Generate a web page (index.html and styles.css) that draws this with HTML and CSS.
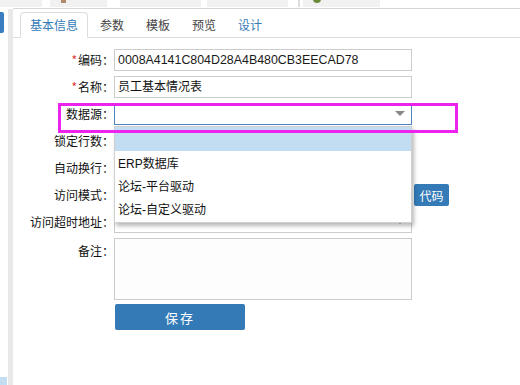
FILE: index.html
```html
<html>

<head>
  <meta charset="utf-8">
  <link rel="stylesheet" href="styles.css">
</head>

<body>
  <div class="topbar">
    <span class="tb" style="width:42px"></span>
    <span class="tb gap" style="width:8px"></span>
    <span class="tb" style="width:57px"><i class="tb-icon"></i></span>
    <span class="tb gap" style="width:13px"></span>
    <span class="tb" style="width:81px"></span>
    <span class="tb gap" style="width:6px"></span>
    <span class="tb" style="width:81px"></span>
    <span class="tb gap" style="width:10px"></span>
    <span class="tb sep" style="width:2px"></span>
    <span class="tb gap" style="width:3px"></span>
    <span class="tb" style="width:77px"><i class="tb-dot"></i></span>
  </div>

  <div class="frame">
    <div class="rail">
      <span class="rail-tab"></span>
      <span class="rail-foot"></span>
    </div>
    <div class="gutter"></div>

    <div class="main">
      <ul class="tabs">
        <li class="tab active">基本信息</li>
        <li class="tab">参数</li>
        <li class="tab">模板</li>
        <li class="tab">预览</li>
        <li class="tab link">设计</li>
      </ul>

      <div class="form">
        <div class="row">
          <label class="label"><em>*</em>编码：</label>
          <div class="field mono">0008A4141C804D28A4B480CB3EECAD78</div>
        </div>
        <div class="row">
          <label class="label"><em>*</em>名称：</label>
          <div class="field">员工基本情况表</div>
        </div>
        <div class="row">
          <label class="label">数据源：</label>
          <div class="select-wrap">
            <div class="field select focus"></div>
            <ul class="dropdown">
              <li class="option hover"></li>
              <li class="option">ERP数据库</li>
              <li class="option">论坛-平台驱动</li>
              <li class="option">论坛-自定义驱动</li>
            </ul>
          </div>
        </div>
        <div class="row">
          <label class="label">锁定行数：</label>
          <div class="field"></div>
        </div>
        <div class="row">
          <label class="label">自动换行：</label>
          <div class="field select"></div>
        </div>
        <div class="row">
          <label class="label">访问模式：</label>
          <div class="field"></div>
          <button class="btn btn-code">代码</button>
        </div>
        <div class="row">
          <label class="label">访问超时地址：</label>
          <div class="field select"></div>
        </div>
        <div class="row top">
          <label class="label">备注：</label>
          <div class="field area"></div>
        </div>
        <div class="row">
          <span class="label"></span>
          <button class="btn btn-save">保存</button>
        </div>
      </div>
    </div>
  </div>

  <div class="mark"></div>
</body>

</html>
```

FILE: styles.css
```css
body {
  margin: 0;
  width: 520px;
  height: 385px;
  overflow: hidden;
  position: relative;
  font-family: "Liberation Sans", "Noto Sans CJK SC", sans-serif;
  font-size: 12px;
  color: #111;
  background: #fff;
}

.topbar {
  display: flex;
  height: 8px;
}

.tb {
  display: block;
  position: relative;
  height: 7px;
  background: #f1f1f1;
}

.tb.gap {
  background: #fff;
}

.tb.sep {
  background: #ddd;
}

.tb-icon {
  position: absolute;
  left: 11px;
  top: 0;
  width: 5px;
  height: 3px;
  background: #b08a6a;
}

.tb-dot {
  position: absolute;
  left: 10px;
  top: -5px;
  width: 8px;
  height: 8px;
  border-radius: 50%;
  background: #6a8a3a;
}

.frame {
  display: flex;
  height: 377px;
}

.rail {
  width: 8px;
  display: flex;
  flex-direction: column;
  justify-content: space-between;
}

.rail-tab {
  display: block;
  margin-top: 4px;
  width: 4px;
  height: 21px;
  background: #3a7cc0;
  border-radius: 0 2px 2px 0;
}

.rail-foot {
  display: block;
  width: 7px;
  height: 8px;
  background: #c3ddf2;
}

.gutter {
  width: 5px;
  margin-top: 1px;
  background: #e8e8e8;
}

.main {
  flex: 1;
  border-top: 1px solid #d6d6d6;
  padding-top: 3px;
}

.tabs {
  display: flex;
  margin: 0;
  padding: 0 0 0 7px;
  list-style: none;
  border-bottom: 1px solid #ddd;
}

.tab {
  margin-right: 2px;
  margin-bottom: -1px;
  padding: 0 9px;
  line-height: 24px;
  border: 1px solid transparent;
  border-radius: 4px 4px 0 0;
  color: #444;
  font-family: "Noto Sans CJK SC", sans-serif;
}

.tab.active {
  color: #337ab7;
  border-color: #ddd #ddd #fff;
  background: #fff;
}

.tab.link {
  color: #337ab7;
}

.form {
  margin-top: 11px;
}

.row {
  display: flex;
  align-items: center;
  margin-bottom: 5px;
}

.row.top {
  align-items: flex-start;
}

.label {
  width: 101px;
  flex: none;
  text-align: right;
  line-height: 22px;
  white-space: nowrap;
  font-family: "Noto Sans CJK SC", sans-serif;
  color: #111;
}

.row.top .label {
  padding-top: 2px;
}

.label em {
  font-style: normal;
  color: #e03030;
  margin-right: 1px;
}

.field {
  box-sizing: border-box;
  width: 298px;
  height: 22px;
  padding: 0 3px;
  line-height: 20px;
  border: 1px solid #ccc;
  background: #fff;
  color: #111;
  white-space: nowrap;
  overflow: hidden;
}

.field.mono {
  color: #1a1a1a;
  font-size: 12.4px;
}

.field.area {
  height: 62px;
  background: #fdfdfd;
}

.field.select {
  position: relative;
}

.field.select::after {
  content: "";
  position: absolute;
  right: 6px;
  top: 7px;
  border-left: 5px solid transparent;
  border-right: 5px solid transparent;
  border-top: 5px solid #888;
}

.field.focus {
  border-color: #4f86c2;
}

.select-wrap {
  position: relative;
}

.dropdown {
  position: absolute;
  top: 100%;
  left: 0;
  z-index: 2;
  box-sizing: border-box;
  width: 298px;
  margin: 1px 0 0;
  padding: 0;
  list-style: none;
  background: #fff;
  border: 1px solid #d0d0d0;
  box-shadow: 2px 3px 4px rgba(0, 0, 0, 0.28);
}

.option {
  height: 23px;
  line-height: 23px;
  padding-left: 3px;
  color: #111;
}

.option.hover {
  height: 24px;
  margin-bottom: 2px;
  background: #c2ddf1;
}

.btn {
  border: none;
  border-radius: 2px;
  background: #337ab7;
  color: #fff;
  font-family: "Noto Sans CJK SC", sans-serif;
  padding: 0;
}

.btn-code {
  margin-left: 2px;
  width: 35px;
  height: 22px;
  font-size: 12px;
}

.btn-save {
  margin-top: -1px;
  margin-left: 1px;
  width: 130px;
  height: 26px;
  font-size: 13px;
  letter-spacing: 2px;
}

.mark {
  position: absolute;
  left: 58px;
  top: 103px;
  z-index: 3;
  width: 394px;
  height: 24px;
  border: 3px solid #ee22ee;
}
```
